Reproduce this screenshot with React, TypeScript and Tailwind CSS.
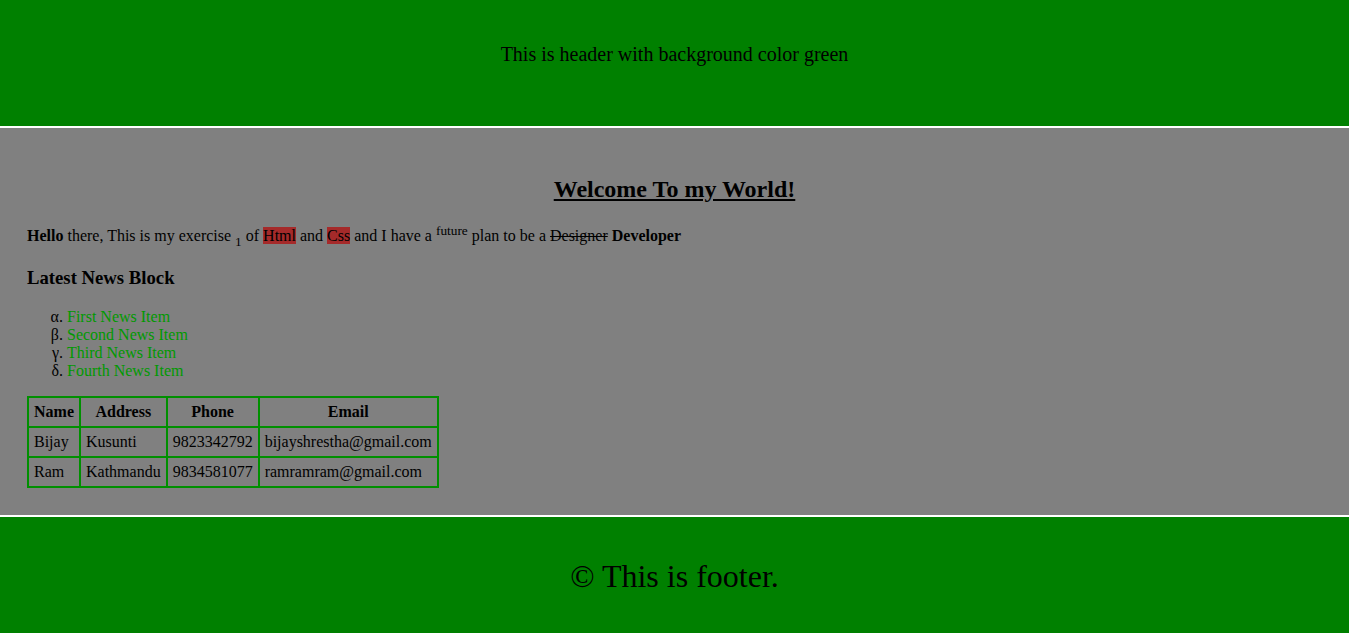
import React from "react";

export default function App() {
  const serif = { fontFamily: '"Liberation Serif", "Times New Roman", serif' };
  return (
    <div className="bg-white text-black" style={serif}>
      <header className="w-[1349px] h-[126px] bg-[#008000] pt-[43px] text-center text-[20px] leading-[23px]">
        This is header with background color green
      </header>
      <main className="w-[1349px] mt-[2px] bg-[#808080] px-[27px] pt-[27px] pb-[27px]">
        <h2 className="text-[24px] font-bold underline text-center my-[20px] leading-[28px]">
          Welcome To my World!
        </h2>
        <p className="text-[16px] leading-[18px]">
          <b>Hello</b> there, This is my exercise{" "}
          <sub className="static align-sub text-[13.33px] leading-[15px]">1</sub> of{" "}
          <span className="bg-[#a52a2a]">Html</span> and <span className="bg-[#a52a2a]">Css</span> and I have a{" "}
          <sup className="static align-super text-[13.33px] leading-[15px]">future</sup> plan to be a <del>Designer</del>{" "}
          <b>Developer</b>
        </p>
        <h3 className="text-[18.72px] font-bold my-[18.72px] leading-[22px]">Latest News Block</h3>
        <ol className="list-[lower-greek] pl-[40px] my-4 text-[16px] leading-[18px]">
          <li><span className="text-[#009900]">First News Item</span></li>
          <li><span className="text-[#009900]">Second News Item</span></li>
          <li><span className="text-[#009900]">Third News Item</span></li>
          <li><span className="text-[#009900]">Fourth News Item</span></li>
        </ol>
        <table className="border-collapse border-2 border-[#009000] text-[16px] leading-[18px]">
          <thead>
            <tr>
              <th className="border-2 border-[#009000] p-[5px] font-bold">Name</th>
              <th className="border-2 border-[#009000] p-[5px] font-bold">Address</th>
              <th className="border-2 border-[#009000] p-[5px] font-bold">Phone</th>
              <th className="border-2 border-[#009000] p-[5px] font-bold">Email</th>
            </tr>
          </thead>
          <tbody>
            <tr>
              <td className="border-2 border-[#009000] p-[5px]">Bijay</td>
              <td className="border-2 border-[#009000] p-[5px]">Kusunti</td>
              <td className="border-2 border-[#009000] p-[5px]">9823342792</td>
              <td className="border-2 border-[#009000] p-[5px]">bijayshrestha@gmail.com</td>
            </tr>
            <tr>
              <td className="border-2 border-[#009000] p-[5px]">Ram</td>
              <td className="border-2 border-[#009000] p-[5px]">Kathmandu</td>
              <td className="border-2 border-[#009000] p-[5px]">9834581077</td>
              <td className="border-2 border-[#009000] p-[5px]">ramramram@gmail.com</td>
            </tr>
          </tbody>
        </table>
      </main>
      <footer className="w-[1349px] h-[126px] mt-[2px] bg-[#008000] pt-[41px] text-center text-[32px] leading-[37px]">
        © This is footer.
      </footer>
    </div>
  );
}
